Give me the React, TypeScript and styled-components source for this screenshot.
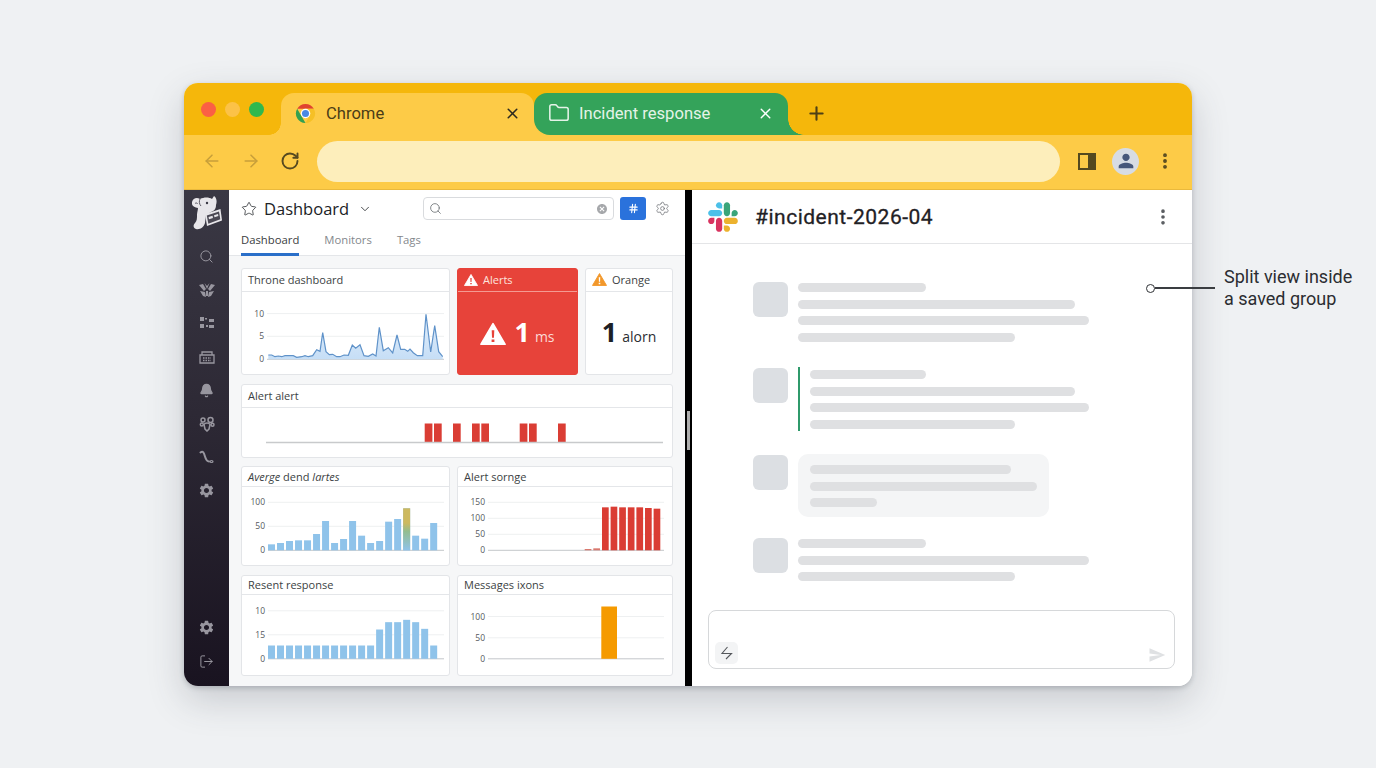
import React from "react";
import styled, { createGlobalStyle } from "styled-components";
import {
  ArrowLeft,
  ArrowRight,
  Bell,
  ChevronDown,
  EllipsisVertical,
  Folder,
  Hash,
  LogOut,
  Plus,
  RotateCw,
  Search,
  Settings,
  Star,
  X,
} from "lucide-react";
import { MdCancel, MdPerson, MdSend, MdSettings } from "react-icons/md";

const TAB_YELLOW = "#fdcb47";
const STRIP_YELLOW = "#f5b70b";
const TAB_GREEN = "#34a35a";
const UI_FONT = `"Open Sans", "Noto Sans", sans-serif`;
const GOOGLE_FONT = `Roboto, "Liberation Sans", sans-serif`;

const GlobalStyle = createGlobalStyle`
  html, body {
    margin: 0;
    background: #eff1f3;
  }
  * {
    box-sizing: border-box;
  }
`;

const Page = styled.div`
  position: relative;
  width: 1376px;
  height: 768px;
  padding: 83px 0 0 184px;
  overflow: hidden;
  background: #eff1f3;
`;

const BrowserWindow = styled.div`
  width: 1008px;
  height: 603px;
  border-radius: 14px;
  overflow: hidden;
  display: flex;
  flex-direction: column;
  background: white;
  box-shadow: 0 14px 36px rgba(60, 66, 76, 0.22), 0 2px 5px rgba(60, 66, 76, 0.24);
`;

const TabStrip = styled.div`
  height: 52px;
  flex: none;
  display: flex;
  align-items: flex-end;
  padding-left: 97px;
  position: relative;
  background: ${STRIP_YELLOW};
`;

const TrafficLights = styled.div`
  position: absolute;
  left: 17px;
  top: 19px;
  display: flex;
  gap: 9px;
`;

const Light = styled.span<{ $color: string }>`
  width: 15px;
  height: 15px;
  border-radius: 50%;
  background: ${(p) => p.$color};
`;

const Tab = styled.div<{ $active?: boolean }>`
  width: ${(p) => (p.$active ? 253 : 254)}px;
  height: 42px;
  display: flex;
  align-items: center;
  position: relative;
  padding: 0 ${(p) => (p.$active ? 13 : 14)}px 2px 14px;
  gap: ${(p) => (p.$active ? 10 : 9)}px;
  font-family: ${GOOGLE_FONT};
  font-size: 16.6px;
  border-radius: ${(p) => (p.$active ? "13px 13px 0 0" : "13px 13px 0 16px")};
  z-index: ${(p) => (p.$active ? 0 : 1)};
  color: ${(p) => (p.$active ? "#4a3c18" : "#e4f3e8")};
  background: ${(p) => (p.$active ? TAB_YELLOW : TAB_GREEN)};
  &::before {
    content: "";
    position: absolute;
    bottom: 0;
    width: 16px;
    height: 16px;
    ${(p) =>
      p.$active
        ? `left: -12px; width: 12px; height: 12px; background: radial-gradient(circle at 0 0, transparent 11.5px, ${TAB_YELLOW} 12px);`
        : `right: -16px; background: radial-gradient(circle at 100% 0, transparent 15.5px, ${TAB_GREEN} 16px);`}
  }
  &::after {
    content: "";
    position: absolute;
    display: ${(p) => (p.$active ? "block" : "none")};
    right: -16px;
    bottom: 0;
    width: 16px;
    height: 16px;
    background: ${TAB_YELLOW};
  }
`;

const TabTitle = styled.span`
  flex: 1;
`;

const NewTab = styled.div`
  margin: 0 0 11px 18px;
  display: flex;
  color: #4e4116;
`;

const Toolbar = styled.div`
  height: 55px;
  flex: none;
  display: flex;
  align-items: center;
  padding: 0 17px 2px 18px;
  background: ${TAB_YELLOW};
  border-bottom: 1px solid #eab93c;
`;

const NavIcons = styled.div`
  display: flex;
  align-items: center;
  gap: 19px;
  width: 115px;
`;

const Omnibox = styled.div`
  width: 743px;
  height: 41px;
  border-radius: 21px;
  background: #fdeebb;
`;

const ToolIcons = styled.div`
  flex: 1;
  display: flex;
  align-items: center;
  justify-content: space-between;
  padding-left: 18px;
  color: #574a20;
`;

const PanelGlyph = styled.div`
  width: 18px;
  height: 17px;
  border: 2.5px solid #54491f;
  background: linear-gradient(90deg, transparent 55%, #54491f 55%);
`;

const Avatar = styled.div`
  width: 27px;
  height: 27px;
  border-radius: 50%;
  display: flex;
  align-items: center;
  justify-content: center;
  color: #46577a;
  background: #d7dce4;
`;

const Content = styled.div`
  flex: 1;
  min-height: 0;
  display: flex;
`;

const SideNav = styled.nav`
  width: 45px;
  flex: none;
  display: flex;
  flex-direction: column;
  align-items: center;
  padding-top: 6px;
  color: #98969f;
  background: linear-gradient(180deg, #3a3844 0%, #2d2935 45%, #191320 100%);
`;

const NavList = styled.div`
  display: flex;
  flex-direction: column;
  margin-top: 10px;
`;

const NavFoot = styled(NavList)`
  margin-top: auto;
  margin-bottom: 8px;
`;

const NavItem = styled.div`
  height: 33.4px;
  display: flex;
  align-items: center;
  justify-content: center;
`;

const DashPanel = styled.section`
  width: 456px;
  flex: none;
  display: flex;
  flex-direction: column;
  font-family: ${UI_FONT};
`;

const DashHeader = styled.header`
  height: 66px;
  flex: none;
  padding: 7px 12px 0;
  background: white;
  border-bottom: 1px solid #e4e6e9;
`;

const TitleRow = styled.div`
  display: flex;
  align-items: center;
  height: 23px;
  color: #3c4043;
`;

const DashTitle = styled.h1`
  margin: 0 9px 0 7px;
  font-size: 16.5px;
  font-weight: 400;
  color: #202226;
`;

const SearchBox = styled.div`
  width: 191px;
  height: 23px;
  margin-left: 51px;
  display: flex;
  align-items: center;
  justify-content: space-between;
  padding: 0 5px;
  color: #72767a;
  border: 1px solid #d9dbde;
  border-radius: 4px;
`;

const HashButton = styled.div`
  width: 26px;
  height: 23px;
  margin: 0 9px 0 6px;
  display: flex;
  align-items: center;
  justify-content: center;
  border-radius: 3px;
  color: white;
  background: #2a72dc;
`;

const DashTabs = styled.div`
  display: flex;
  gap: 25px;
  margin-top: 7px;
`;

const DashTab = styled.div<{ $active?: boolean }>`
  height: 29px;
  padding-top: 5px;
  font-size: 11.3px;
  color: ${(p) => (p.$active ? "#3a3d41" : "#84888d")};
  border-bottom: 3px solid ${(p) => (p.$active ? "#2a6fc9" : "transparent")};
`;

const Board = styled.div`
  flex: 1;
  min-height: 0;
  display: grid;
  grid-template-rows: 107px 74px 100px 101px;
  row-gap: 8.5px;
  padding: 12px 12px 0;
  background: #f6f7f8;
`;

const BoardRow = styled.div<{ $columns: string }>`
  display: grid;
  grid-template-columns: ${(p) => p.$columns};
  column-gap: 7px;
  min-height: 0;
`;

const Card = styled.article<{ $alert?: boolean }>`
  min-width: 0;
  display: flex;
  flex-direction: column;
  overflow: hidden;
  border-radius: 3px;
  border: 1px solid ${(p) => (p.$alert ? "#e7433a" : "#e3e5e8")};
  color: ${(p) => (p.$alert ? "#fde3df" : "#3c3f43")};
  background: ${(p) => (p.$alert ? "#e7433a" : "white")};
`;

const CardTitle = styled.div<{ $alert?: boolean; $h?: number }>`
  height: ${(p) => p.$h ?? 23}px;
  flex: none;
  display: flex;
  align-items: center;
  gap: 5px;
  padding: 0 6px 1px;
  font-size: 11px;
  border-bottom: 1px solid ${(p) => (p.$alert ? "#f49a92" : "#e4e6e9")};
  em {
    font-style: italic;
  }
`;

const StatBody = styled.div`
  flex: 1;
  display: flex;
  align-items: baseline;
  justify-content: center;
  padding-top: 21px;
`;

const StatValue = styled.span<{ $alert?: boolean }>`
  font-size: 27px;
  font-weight: 700;
  margin-left: ${(p) => (p.$alert ? 8 : 0)}px;
  color: ${(p) => (p.$alert ? "white" : "#1c2026")};
`;

const StatUnit = styled.span<{ $alert?: boolean }>`
  margin-left: 5px;
  font-size: 14px;
  color: ${(p) => (p.$alert ? "#fbdad6" : "#2a2d31")};
`;

const GlyphSvg = styled.svg<{ $lift?: number }>`
  align-self: center;
  margin-top: ${(p) => p.$lift ?? 0}px;
`;

const ChartSvg = styled.svg`
  display: block;
  font-family: ${UI_FONT};
  font-size: 8.5px;
  fill: #55595e;
`;

const SplitDivider = styled.div`
  width: 7px;
  flex: none;
  position: relative;
  background: #000;
  &::after {
    content: "";
    position: absolute;
    left: 2px;
    top: 221px;
    width: 3px;
    height: 39px;
    background: #aeaeae;
  }
`;

const SlackPanel = styled.section`
  flex: 1;
  min-width: 0;
  display: flex;
  flex-direction: column;
  background: white;
`;

const SlackHeader = styled.header`
  height: 54px;
  flex: none;
  display: flex;
  align-items: center;
  padding: 0 19px 0 16px;
  border-bottom: 1px solid #e4e5e7;
  color: #5a5d61;
`;

const ChannelName = styled.h2`
  flex: 1;
  margin: 0 0 0 17px;
  font-family: ${GOOGLE_FONT};
  font-size: 21px;
  font-weight: 400;
  letter-spacing: 0.5px;
  -webkit-text-stroke: 0.3px #1f2125;
  color: #1f2125;
`;

const MessageList = styled.div`
  flex: 1;
  display: grid;
  grid-template-rows: 86px 87px 83px auto;
  padding: 38px 0 0 61px;
`;

const Message = styled.div`
  display: flex;
  align-items: flex-start;
  gap: 10px;
`;

const MessageAvatar = styled.div`
  width: 35px;
  height: 35px;
  flex: none;
  border-radius: 6px;
  background: #dcdfe3;
`;

const LineStack = styled.div`
  display: flex;
  flex-direction: column;
  gap: 7.6px;
  padding-top: 1px;
`;

const QuoteStack = styled(LineStack)`
  margin-top: -1px;
  padding: 3px 0 2px 10px;
  border-left: 2px solid #2f9a6b;
`;

const Bubble = styled(LineStack)`
  width: 251px;
  height: 63px;
  margin-top: -1px;
  padding: 11px 12px 0;
  border-radius: 10px;
  background: #f4f5f6;
`;

const SkeletonLine = styled.div<{ $w: number }>`
  width: ${(p) => p.$w}px;
  height: 9px;
  border-radius: 5px;
  background: #dfe0e2;
`;

const Composer = styled.div`
  height: 59px;
  flex: none;
  margin: 0 17px 17px 16px;
  padding: 0 8px 4px 6px;
  display: flex;
  align-items: flex-end;
  justify-content: space-between;
  border: 1px solid #d6d8da;
  border-radius: 8px;
`;

const ComposerChip = styled.div`
  width: 23px;
  height: 22px;
  display: flex;
  align-items: center;
  justify-content: center;
  border-radius: 5px;
  background: #f3f4f5;
`;

const Callout = styled.div`
  position: absolute;
  left: 1146px;
  top: 266px;
  display: flex;
  align-items: center;
  gap: 9px;
  font-family: ${GOOGLE_FONT};
  font-size: 18px;
  line-height: 22px;
  color: #2b2d31;
`;

const CalloutDot = styled.span`
  width: 9px;
  height: 9px;
  flex: none;
  border-radius: 50%;
  border: 1.5px solid #2f3236;
  background: white;
`;

const CalloutLine = styled.span`
  width: 60px;
  height: 1.5px;
  margin-left: -9px;
  background: #3a3d41;
`;

const DogMark = styled.svg`
  margin-left: 1px;
  flex: none;
`;

const ChromeLogo = () => (
  <svg width="21" height="21" viewBox="-11 -11 22 22">
    <path d="M-8.7-5A10 10 0 0 1 8.7-5L0 -5Z" fill="#e0432f" />
    <path d="M8.7-5A10 10 0 0 1 0 10L4.3 2.5 0-5Z" fill="#f6c026" />
    <path d="M0 10A10 10 0 0 1-8.7-5L-4.3 2.5Z" fill="#35a050" />
    <circle r="5" fill="white" />
    <circle r="3.7" fill="#4a88e4" />
  </svg>
);

const SlackLogo = () => (
  <svg width="30" height="30" viewBox="0 0 124 124">
    <path d="M26.4 78.2c0 7.1-5.8 12.9-12.9 12.9S.6 85.3.6 78.2c0-7.1 5.8-12.9 12.9-12.9h12.9v12.9z" fill="#d8335f" />
    <path d="M32.9 78.2c0-7.1 5.8-12.9 12.9-12.9s12.9 5.8 12.9 12.9v32.3c0 7.1-5.8 12.9-12.9 12.9s-12.9-5.8-12.9-12.9V78.2z" fill="#d8335f" />
    <path d="M45.8 26.4c-7.1 0-12.9-5.8-12.9-12.9S38.7.6 45.8.6s12.9 5.8 12.9 12.9v12.9H45.8z" fill="#4cc0e8" />
    <path d="M45.8 32.9c7.1 0 12.9 5.8 12.9 12.9s-5.8 12.9-12.9 12.9H13.5C6.4 58.7.6 52.9.6 45.8s5.8-12.9 12.9-12.9h32.3z" fill="#4cc0e8" />
    <path d="M97.6 45.8c0-7.1 5.8-12.9 12.9-12.9s12.9 5.8 12.9 12.9-5.8 12.9-12.9 12.9H97.6V45.8z" fill="#3aa57a" />
    <path d="M91.1 45.8c0 7.1-5.8 12.9-12.9 12.9s-12.9-5.8-12.9-12.9V13.5C65.3 6.4 71.1.6 78.2.6s12.9 5.8 12.9 12.9v32.3z" fill="#3aa57a" />
    <path d="M78.2 97.6c7.1 0 12.9 5.8 12.9 12.9s-5.8 12.9-12.9 12.9-12.9-5.8-12.9-12.9V97.6h12.9z" fill="#ecb22e" />
    <path d="M78.2 91.1c-7.1 0-12.9-5.8-12.9-12.9s5.8-12.9 12.9-12.9h32.3c7.1 0 12.9 5.8 12.9 12.9s-5.8 12.9-12.9 12.9H78.2z" fill="#ecb22e" />
  </svg>
);

const DogLogo = () => (
  <DogMark width="30" height="34" viewBox="0 0 30 34">
    <path
      d="M0 6C1 2 5 1 8 3 12 1 17 1 20 3L22 0C25 2 25 6 24 9 24 13 22 15 19 16L14 19 13 27C12 31 8 34 4 33 1 32 1 29 3 27 5 25 5 22 5 19 5 16 6 14 6 12 2 12-1 9 0 6Z"
      fill="#e8e6ea"
    />
    <path d="M8 3C7 5 7 8 9 10" stroke="#4b4853" strokeWidth="0.9" fill="none" />
    <path d="M13 18 28.500 13 30 24.500 15 30Z" fill="#e8e6ea" />
    <path d="M14.800 19.500 27 15.500 28.300 23.300 16.300 27.800Z" fill="#4b4853" />
    <path d="M16.500 21 20.500 19.800 21 22 17 23.300ZM22 19.200 26 18 26.400 20 22.500 21.200Z" fill="#e8e6ea" />
    <circle cx="15" cy="7" r="1.200" fill="#3a3844" />
    <path d="M3 7.500C4 6.500 5.500 7 5.500 8" stroke="#4b4853" strokeWidth="0.9" fill="none" />
  </DogMark>
);

const WarningGlyph = ({ size, fill, mark, lift }: { size: number; fill: string; mark: string; lift?: number }) => (
  <GlyphSvg $lift={lift} width={size} height={size} viewBox="0 0 24 24">
    <path d="M12 2.5 23.2 21.5H.8Z" fill={fill} stroke={fill} strokeWidth="1.5" strokeLinejoin="round" />
    <path d="M10.8 8.5h2.4l-.3 7h-1.8ZM10.7 17h2.6v2.4h-2.6Z" fill={mark} />
  </GlyphSvg>
);

const LeavesIcon = () => (
  <svg width="16" height="15" viewBox="0 0 16 15" fill="currentColor">
    <path d="M0 2 4 1 7 6 5 8ZM16 2 12 1 9 6 11 8ZM5.5 0 8 3 10.5 0 8 6ZM1 8 6 9 7 14 4 13ZM15 8 10 9 9 14 12 13ZM7 8h2v5H7Z" />
  </svg>
);

const NodesIcon = () => (
  <svg width="16" height="14" viewBox="0 0 16 14" fill="currentColor">
    <path d="M1 1h4v4H1ZM1 8h4v4H1ZM7 9h2v2H7ZM10 3h5v3h-5ZM10 9h5v3h-5ZM6 2h2v1.500H6Z" />
  </svg>
);

const PanelRackIcon = () => (
  <svg width="16" height="14" viewBox="0 0 16 14" fill="none" stroke="currentColor" strokeWidth="1.3">
    <path d="M1 5h14v8H1ZM3 5V2h10v3" />
    <path d="M4 8h8M4 10.500h8" strokeDasharray="1.500 1" />
  </svg>
);

const PawIcon = () => (
  <svg width="16" height="16" viewBox="0 0 16 16" fill="none" stroke="currentColor" strokeWidth="1.5">
    <circle cx="4" cy="4" r="2" />
    <circle cx="11.500" cy="4" r="2.500" />
    <circle cx="2.800" cy="8.500" r="1.500" />
    <circle cx="13.500" cy="8.800" r="1.500" />
    <path d="M5 8.500C6 6.500 10 6.500 11 8.500L10 13 8 15 6 13Z" />
  </svg>
);

const RouteIcon = () => (
  <svg width="15" height="15" viewBox="0 0 15 15" fill="none" stroke="currentColor" strokeWidth="2" strokeLinecap="round">
    <path d="M1.500 2.500C4 0.500 5 3 6 6.500 7 10 8 11.500 10 11.500" />
    <ellipse cx="12.500" cy="11.500" rx="1.500" ry="1" strokeWidth="1.200" />
  </svg>
);

const BoltChipIcon = () => (
  <svg width="14" height="14" viewBox="0 0 14 14" fill="none" stroke="#55585c" strokeWidth="1.100">
    <path d="M7.500 1 2 7.500h9.500L6 13" />
  </svg>
);

type Axis = { label: string; y: number };
type Bar = { x: number; top: number; w: number; color: string };
type Box = { x: number; y: number; w: number; h: number };

// the chart boxes use page coordinates, read straight off the screenshot
const Chart = ({
  box,
  axis,
  gridFrom,
  gridTo,
  base,
  bars = [],
  children,
}: {
  box: Box;
  axis: Axis[];
  gridFrom: number;
  gridTo: number;
  base: number;
  bars?: Bar[];
  children?: React.ReactNode;
}) => (
  <ChartSvg width={box.w} height={box.h} viewBox={`${box.x} ${box.y} ${box.w} ${box.h}`}>
    {axis.map((a) => (
      <g key={a.label + a.y}>
        <line x1={gridFrom} x2={gridTo} y1={a.y} y2={a.y} stroke={a.y === base ? "#c4c7ca" : "#eef0f1"} />
        <text x={gridFrom - 3} y={a.y + 3} textAnchor="end">
          {a.label}
        </text>
      </g>
    ))}
    {bars.map((b) => (
      <rect key={b.x} x={b.x} y={b.top} width={b.w} height={base - b.top} fill={b.color} />
    ))}
    {children}
  </ChartSvg>
);

const BLUE = "#8fc3ea";

// tops are in 3x zoom pixels, 465 is the crop's top edge
const blueBars = (tops: number[]): Bar[] =>
  tops.map((t, i) => ({ x: 268 + i * 9.01, top: 465 + t / 3, w: 7, color: BLUE }));

const averageBars = blueBars([238, 234, 228, 226, 226, 207, 168, 234, 222, 168, 212, 234, 228, 170, 162, 130, 212, 221, 174]);
const responseBars = blueBars([540, 540, 540, 540, 540, 540, 540, 540, 540, 540, 540, 540, 492, 470, 470, 463, 470, 490, 540]);

const sorngeBars: Bar[] = [
  ...[252, 250].map((t, i) => ({ x: 584.7 + i * 8.6, top: 465 + t / 3, w: 6.7, color: "#d9786e" })),
  ...[127, 125, 127, 127, 127, 129, 131].map((t, i) => ({
    x: 602 + i * 8.6,
    top: 465 + t / 3,
    w: 6.7,
    color: "#da3d34",
  })),
];

const alertTicks = [424.7, 434, 453, 472, 481.3, 519.7, 529, 558];

const linePoints: [number, number][] = [
  [85, 255], [95, 255], [105, 260], [115, 258], [125, 260], [135, 257], [160, 257], [170, 262],
  [185, 260], [195, 257], [205, 260], [218, 257], [230, 239], [240, 244], [248, 188], [258, 245],
  [268, 254], [278, 253], [290, 260], [300, 260], [312, 255], [325, 256], [337, 225], [347, 235],
  [360, 224], [372, 257], [385, 259], [398, 252], [408, 258], [418, 172], [430, 242], [445, 233],
  [458, 249], [471, 195], [482, 238], [494, 238], [503, 244], [510, 237], [520, 248], [532, 257],
  [548, 257], [558, 133], [572, 246], [584, 167], [596, 245], [608, 260],
];

const linePath = linePoints.map(([x, y]) => `${(240 + x / 3).toFixed(1)},${(270 + y / 3).toFixed(1)}`).join(" ");

const NAV_ICON = { size: 15, strokeWidth: 1.6 };

const App = () => (
  <Page>
    <GlobalStyle />
    <BrowserWindow>
      <TabStrip>
        <TrafficLights>
          <Light $color="#fb6044" />
          <Light $color="#fcc247" />
          <Light $color="#2fb84e" />
        </TrafficLights>
        <Tab $active>
          <ChromeLogo />
          <TabTitle>Chrome</TabTitle>
          <X size={17} strokeWidth={2.2} color="#2d2a1e" />
        </Tab>
        <Tab>
          <Folder size={22} strokeWidth={1.7} />
          <TabTitle>Incident response</TabTitle>
          <X size={17} strokeWidth={2} color="white" />
        </Tab>
        <NewTab>
          <Plus size={21} strokeWidth={2.4} />
        </NewTab>
      </TabStrip>
      <Toolbar>
        <NavIcons>
          <ArrowLeft size={20} strokeWidth={1.8} color="#c79f3a" />
          <ArrowRight size={20} strokeWidth={1.8} color="#c79f3a" />
          <RotateCw size={20} strokeWidth={2.3} color="#574a20" />
        </NavIcons>
        <Omnibox />
        <ToolIcons>
          <PanelGlyph />
          <Avatar>
            <MdPerson size={22} />
          </Avatar>
          <EllipsisVertical size={20} strokeWidth={2.6} />
        </ToolIcons>
      </Toolbar>
      <Content>
        <SideNav>
          <DogLogo />
          <NavList>
            <NavItem>
              <Search {...NAV_ICON} />
            </NavItem>
            <NavItem>
              <LeavesIcon />
            </NavItem>
            <NavItem>
              <NodesIcon />
            </NavItem>
            <NavItem>
              <PanelRackIcon />
            </NavItem>
            <NavItem>
              <Bell size={15} fill="currentColor" />
            </NavItem>
            <NavItem>
              <PawIcon />
            </NavItem>
            <NavItem>
              <RouteIcon />
            </NavItem>
            <NavItem>
              <MdSettings size={17} />
            </NavItem>
          </NavList>
          <NavFoot>
            <NavItem>
              <MdSettings size={17} />
            </NavItem>
            <NavItem>
              <LogOut {...NAV_ICON} />
            </NavItem>
          </NavFoot>
        </SideNav>
        <DashPanel>
          <DashHeader>
            <TitleRow>
              <Star size={16} strokeWidth={1.3} />
              <DashTitle>Dashboard</DashTitle>
              <ChevronDown size={14} strokeWidth={1.6} />
              <SearchBox>
                <Search size={13} strokeWidth={1.6} />
                <MdCancel size={12} color="#a6a8ab" />
              </SearchBox>
              <HashButton>
                <Hash size={11} strokeWidth={2.4} />
              </HashButton>
              <Settings size={15} strokeWidth={1.3} color="#75787c" />
            </TitleRow>
            <DashTabs>
              <DashTab $active>Dashboard</DashTab>
              <DashTab>Monitors</DashTab>
              <DashTab>Tags</DashTab>
            </DashTabs>
          </DashHeader>
          <Board>
            <BoardRow $columns="209px 121px 88px">
              <Card>
                <CardTitle>Throne dashboard</CardTitle>
                <Chart
                  box={{ x: 242, y: 292, w: 207, h: 82 }}
                  gridFrom={267}
                  gridTo={444}
                  base={359.3}
                  axis={[
                    { label: "10", y: 313.6 },
                    { label: "5", y: 336.3 },
                    { label: "0", y: 359.3 },
                  ]}
                >
                  <defs>
                    <linearGradient id="lineFill" x1="0" x2="0" y1="0" y2="1">
                      <stop offset="0" stopColor="#e3effb" />
                      <stop offset="1" stopColor="#c6def6" />
                    </linearGradient>
                  </defs>
                  <polygon points={`268.3,359.3 ${linePath} 442.7,359.3`} fill="url(#lineFill)" />
                  <polyline points={linePath} fill="none" stroke="#5f92c9" strokeWidth="1.2" />
                </Chart>
              </Card>
              <Card $alert>
                <CardTitle $alert>
                  <WarningGlyph size={14} fill="white" mark="#e7433a" />
                  Alerts
                </CardTitle>
                <StatBody>
                  <WarningGlyph size={26} fill="white" mark="#e7433a" lift={-20} />
                  <StatValue $alert>1</StatValue>
                  <StatUnit $alert>ms</StatUnit>
                </StatBody>
              </Card>
              <Card>
                <CardTitle>
                  <WarningGlyph size={15} fill="#f2982b" mark="white" />
                  Orange
                </CardTitle>
                <StatBody>
                  <StatValue>1</StatValue>
                  <StatUnit>alorn</StatUnit>
                </StatBody>
              </Card>
            </BoardRow>
            <BoardRow $columns="1fr">
              <Card>
                <CardTitle>Alert alert</CardTitle>
                <Chart box={{ x: 242, y: 407.5, w: 430, h: 49 }} gridFrom={266} gridTo={663} base={442} axis={[]}>
                  {alertTicks.map((x) => (
                    <rect key={x} x={x} y={423} width={7.7} height={19} fill="#da3d34" />
                  ))}
                  <line x1={266} x2={663} y1={442} y2={442} stroke="#c8cacc" strokeWidth="1.5" />
                </Chart>
              </Card>
            </BoardRow>
            <BoardRow $columns="209px 216px">
              <Card>
                <CardTitle $h={20}>
                  <span>
                    <em>Averge</em> dend <em>lartes</em>
                  </span>
                </CardTitle>
                <Chart
                  box={{ x: 242, y: 487, w: 207, h: 78 }}
                  gridFrom={268}
                  gridTo={444}
                  base={550.3}
                  axis={[
                    { label: "100", y: 502.3 },
                    { label: "50", y: 526.3 },
                    { label: "0", y: 550.3 },
                  ]}
                  bars={averageBars}
                >
                  <defs>
                    <linearGradient id="mixedBar" x1="0" x2="0" y1="0" y2="1">
                      <stop offset="0.35" stopColor="#cdb95f" />
                      <stop offset="0.55" stopColor="#93bd90" />
                      <stop offset="1" stopColor="#8fc3ea" />
                    </linearGradient>
                  </defs>
                  <rect x={268 + 15 * 9.01} y={508.3} width={7} height={42} fill="url(#mixedBar)" />
                </Chart>
              </Card>
              <Card>
                <CardTitle $h={20}>Alert sornge</CardTitle>
                <Chart
                  box={{ x: 458, y: 487, w: 214, h: 78 }}
                  gridFrom={488}
                  gridTo={664}
                  base={550.3}
                  axis={[
                    { label: "150", y: 502.3 },
                    { label: "100", y: 518.3 },
                    { label: "50", y: 534.3 },
                    { label: "0", y: 550.3 },
                  ]}
                  bars={sorngeBars}
                />
              </Card>
            </BoardRow>
            <BoardRow $columns="209px 216px">
              <Card>
                <CardTitle $h={19}>Resent response</CardTitle>
                <Chart
                  box={{ x: 242, y: 594.5, w: 207, h: 80 }}
                  gridFrom={268}
                  gridTo={444}
                  base={658.3}
                  axis={[
                    { label: "10", y: 610.3 },
                    { label: "15", y: 634.3 },
                    { label: "0", y: 658.3 },
                  ]}
                  bars={responseBars}
                />
              </Card>
              <Card>
                <CardTitle $h={19}>Messages ixons</CardTitle>
                <Chart
                  box={{ x: 458, y: 594.5, w: 214, h: 80 }}
                  gridFrom={488}
                  gridTo={664}
                  base={658.3}
                  axis={[
                    { label: "100", y: 616 },
                    { label: "50", y: 637.3 },
                    { label: "0", y: 658.3 },
                  ]}
                  bars={[{ x: 601.3, top: 606, w: 15.7, color: "#f59a00" }]}
                />
              </Card>
            </BoardRow>
          </Board>
        </DashPanel>
        <SplitDivider />
        <SlackPanel>
          <SlackHeader>
            <SlackLogo />
            <ChannelName>#incident-2026-04</ChannelName>
            <EllipsisVertical size={20} strokeWidth={2.4} />
          </SlackHeader>
          <MessageList>
            <Message>
              <MessageAvatar />
              <LineStack>
                <SkeletonLine $w={128} />
                <SkeletonLine $w={277} />
                <SkeletonLine $w={291} />
                <SkeletonLine $w={217} />
              </LineStack>
            </Message>
            <Message>
              <MessageAvatar />
              <QuoteStack>
                <SkeletonLine $w={116} />
                <SkeletonLine $w={265} />
                <SkeletonLine $w={279} />
                <SkeletonLine $w={205} />
              </QuoteStack>
            </Message>
            <Message>
              <MessageAvatar />
              <Bubble>
                <SkeletonLine $w={201} />
                <SkeletonLine $w={227} />
                <SkeletonLine $w={67} />
              </Bubble>
            </Message>
            <Message>
              <MessageAvatar />
              <LineStack>
                <SkeletonLine $w={128} />
                <SkeletonLine $w={291} />
                <SkeletonLine $w={217} />
              </LineStack>
            </Message>
          </MessageList>
          <Composer>
            <ComposerChip>
              <BoltChipIcon />
            </ComposerChip>
            <MdSend size={18} color="#dfe1e3" />
          </Composer>
        </SlackPanel>
      </Content>
    </BrowserWindow>
    <Callout>
      <CalloutDot />
      <CalloutLine />
      <span>
        Split view inside
        <br />a saved group
      </span>
    </Callout>
  </Page>
);

export default App;
